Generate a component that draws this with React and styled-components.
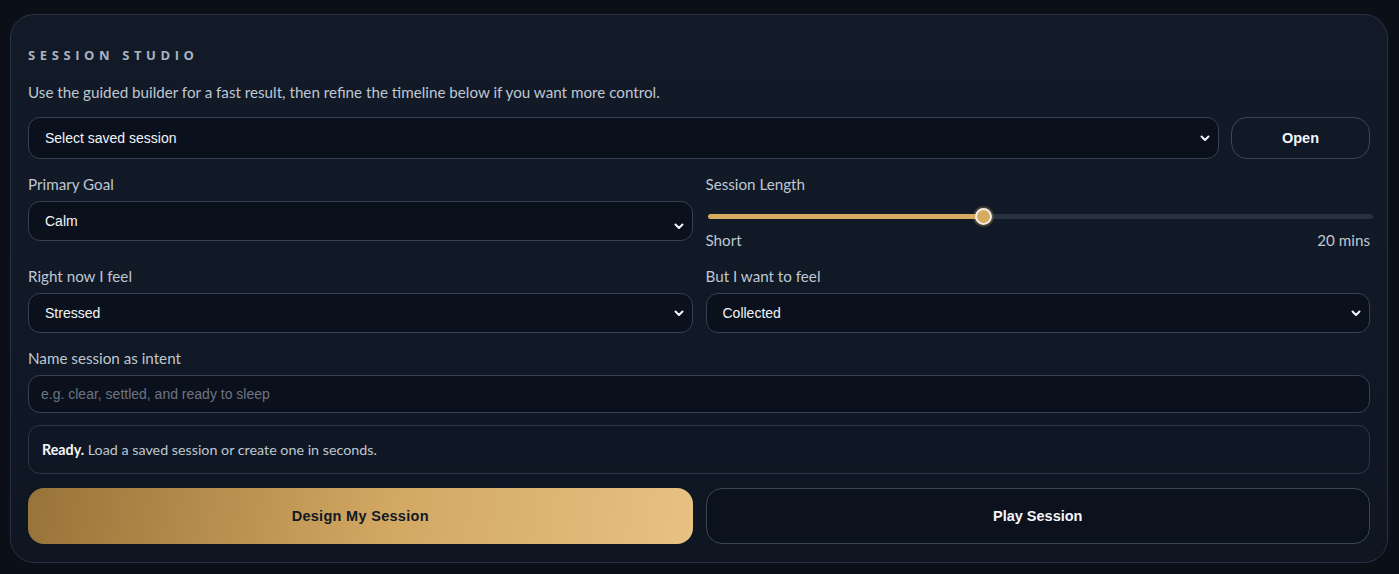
import React, { useState } from 'react'
import styled, { createGlobalStyle } from 'styled-components'

const GlobalStyle = createGlobalStyle`
  html, body {
    margin: 0;
    background: #0a0f18;
  }
  body {
    font-family: Lato, "Open Sans", sans-serif;
    color: #cbd5e1;
  }
  * { box-sizing: border-box; }
`

const ui = {
  Page: styled.div`
    padding: 14px 11px 12px 10px;
  `,
  Card: styled.section`
    display: flex;
    flex-direction: column;
    padding: 30px 17px 18px;
    background: linear-gradient(180deg, #121a27 0%, #111826 60%, #0f1622 100%);
    border: 1px solid #283243;
    border-radius: 24px;
  `,
  Heading: styled.h2`
    margin: 0;
    font-family: "Open Sans", sans-serif;
    font-size: 13px;
    font-weight: 700;
    line-height: 20px;
    letter-spacing: 4.6px;
    color: #a9b3c2;
  `,
  Lead: styled.p`
    margin: 17px 0 0;
    font-size: 15.2px;
    line-height: 20px;
    color: #bfc7d2;
  `,
  LoadRow: styled.div`
    display: flex;
    gap: 12px;
    margin-top: 15px;
    height: 42px;
  `,
  Grid: styled.div`
    display: grid;
    grid-template-columns: 1fr 1fr;
    column-gap: 13px;
    row-gap: 16px;
    margin-top: 15px;
  `,
  Field: styled.div`
    display: flex;
    flex-direction: column;
    gap: 7px;
    margin-top: ${p => p.$top || 0}px;
  `,
  Label: styled.label`
    font-size: 15.2px;
    line-height: 20px;
    color: #bfc7d2;
  `,
  SelectWrap: styled.div`
    position: relative;
    flex: 1;
    display: flex;
  `,
  Select: styled.select`
    appearance: none;
    flex: 1;
    width: 100%;
    height: ${p => p.$h || 40}px;
    padding: 0 36px 0 16px;
    background: #0b111c;
    border: 1px solid #354154;
    border-radius: 12px;
    font-family: "Liberation Sans", Arial, sans-serif;
    font-size: 14px;
    color: #f1f5f9;
    outline: none;
  `,
  Chevron: styled.svg`
    position: absolute;
    right: 9px;
    top: 50%;
    margin-top: -3px;
    pointer-events: none;
  `,
  Input: styled.input`
    height: 38px;
    padding: 0 12px;
    background: #0b111c;
    border: 1px solid #354154;
    border-radius: 12px;
    font-family: "Liberation Sans", Arial, sans-serif;
    font-size: 14px;
    color: #f1f5f9;
    outline: none;
    &::placeholder { color: #6b7483; }
  `,
  GhostButton: styled.button`
    width: ${p => p.$w ? `${p.$w}px` : 'auto'};
    height: ${p => p.$h || 42}px;
    background: ${p => p.$dark ? '#0c121d' : '#111826'};
    border: 1px solid #3a4558;
    border-radius: 16px;
    font-family: "Liberation Sans", Arial, sans-serif;
    font-size: 14.5px;
    font-weight: 700;
    color: #f4f6f9;
    cursor: pointer;
  `,
  GoldButton: styled.button`
    height: 56px;
    border: none;
    border-radius: 16px;
    background: linear-gradient(100deg, #98733a 0%, #b08848 22%, #d2a863 55%, #e7c283 100%);
    font-family: "Liberation Sans", Arial, sans-serif;
    font-size: 14.5px;
    font-weight: 700;
    letter-spacing: 0.3px;
    color: #111826;
    cursor: pointer;
  `,
  SliderBox: styled.div`
    display: flex;
    flex-direction: column;
  `,
  Range: styled.input`
    appearance: none;
    -webkit-appearance: none;
    width: calc(100% + 1px);
    height: 5px;
    margin: 13px 0 11px 2px;
    border-radius: 3px;
    outline: none;
    &::-webkit-slider-thumb {
      -webkit-appearance: none;
      width: 17px;
      height: 17px;
      border-radius: 50%;
      background: #d8aa5f;
      border: 2px solid #f3ede2;
      box-shadow: 0 0 0 2px rgba(216,170,95,0.25);
      cursor: pointer;
    }
  `,
  RangeLegend: styled.div`
    display: flex;
    justify-content: space-between;
    font-size: 15.2px;
    line-height: 20px;
    color: #bfc7d2;
  `,
  Status: styled.div`
    margin-top: 12px;
    height: 49px;
    display: flex;
    align-items: center;
    padding: 0 13px;
    border: 1px solid #2c3748;
    border-radius: 12px;
    font-size: 14.3px;
    color: #bfc7d2;
    b { color: #f4f6f9; font-weight: 700; }
  `,
  Actions: styled.div`
    display: grid;
    grid-template-columns: 1fr 1fr;
    gap: 13px;
    margin-top: 14px;
  `
}

function Chevron() {
  return (
    <ui.Chevron width="10" height="7" viewBox="0 0 10 7">
      <path d="M1.5 1.5 L5 5 L8.5 1.5" fill="none" stroke="#f1f5f9" strokeWidth="2" strokeLinecap="round" strokeLinejoin="round" />
    </ui.Chevron>
  )
}

function Dropdown({ options, h }) {
  return (
    <ui.SelectWrap>
      <ui.Select $h={h} defaultValue={options[0]}>
        {options.map(o => <option key={o}>{o}</option>)}
      </ui.Select>
      <Chevron />
    </ui.SelectWrap>
  )
}

export default function App() {
  const [length, setLength] = useState(20)
  const min = 6
  const max = 40
  const pct = ((length - min) / (max - min)) * 100
  // fill up to the thumb centre
  const fill = `calc(8px + (100% - 16px) * ${pct / 100})`

  return (
    <ui.Page>
      <GlobalStyle />
      <ui.Card>
        <ui.Heading>SESSION STUDIO</ui.Heading>
        <ui.Lead>Use the guided builder for a fast result, then refine the timeline below if you want more control.</ui.Lead>

        <ui.LoadRow>
          <Dropdown h={42} options={['Select saved session']} />
          <ui.GhostButton $w={139}>Open</ui.GhostButton>
        </ui.LoadRow>

        <ui.Grid>
          <ui.Field>
            <ui.Label>Primary Goal</ui.Label>
            <Dropdown options={['Calm', 'Focus', 'Sleep', 'Energy']} />
          </ui.Field>
          <ui.Field>
            <ui.Label>Session Length</ui.Label>
            <ui.SliderBox>
              <ui.Range
                type="range"
                min={min}
                max={max}
                value={length}
                onChange={e => setLength(Number(e.target.value))}
                style={{ background: `linear-gradient(to right, #d6ab62 0, #d6ab62 ${fill}, #273142 ${fill}, #273142 100%)` }}
              />
              <ui.RangeLegend>
                <span>Short</span>
                <span>{length} mins</span>
              </ui.RangeLegend>
            </ui.SliderBox>
          </ui.Field>
          <ui.Field>
            <ui.Label>Right now I feel</ui.Label>
            <Dropdown options={['Stressed', 'Tired', 'Restless']} />
          </ui.Field>
          <ui.Field>
            <ui.Label>But I want to feel</ui.Label>
            <Dropdown options={['Collected', 'Rested', 'Clear']} />
          </ui.Field>
        </ui.Grid>

        <ui.Field $top={15}>
          <ui.Label>Name session as intent</ui.Label>
          <ui.Input placeholder="e.g. clear, settled, and ready to sleep" />
        </ui.Field>

        <ui.Status>
          <span><b>Ready.</b> Load a saved session or create one in seconds.</span>
        </ui.Status>

        <ui.Actions>
          <ui.GoldButton>Design My Session</ui.GoldButton>
          <ui.GhostButton $dark $h={56}>Play Session</ui.GhostButton>
        </ui.Actions>
      </ui.Card>
    </ui.Page>
  )
}
